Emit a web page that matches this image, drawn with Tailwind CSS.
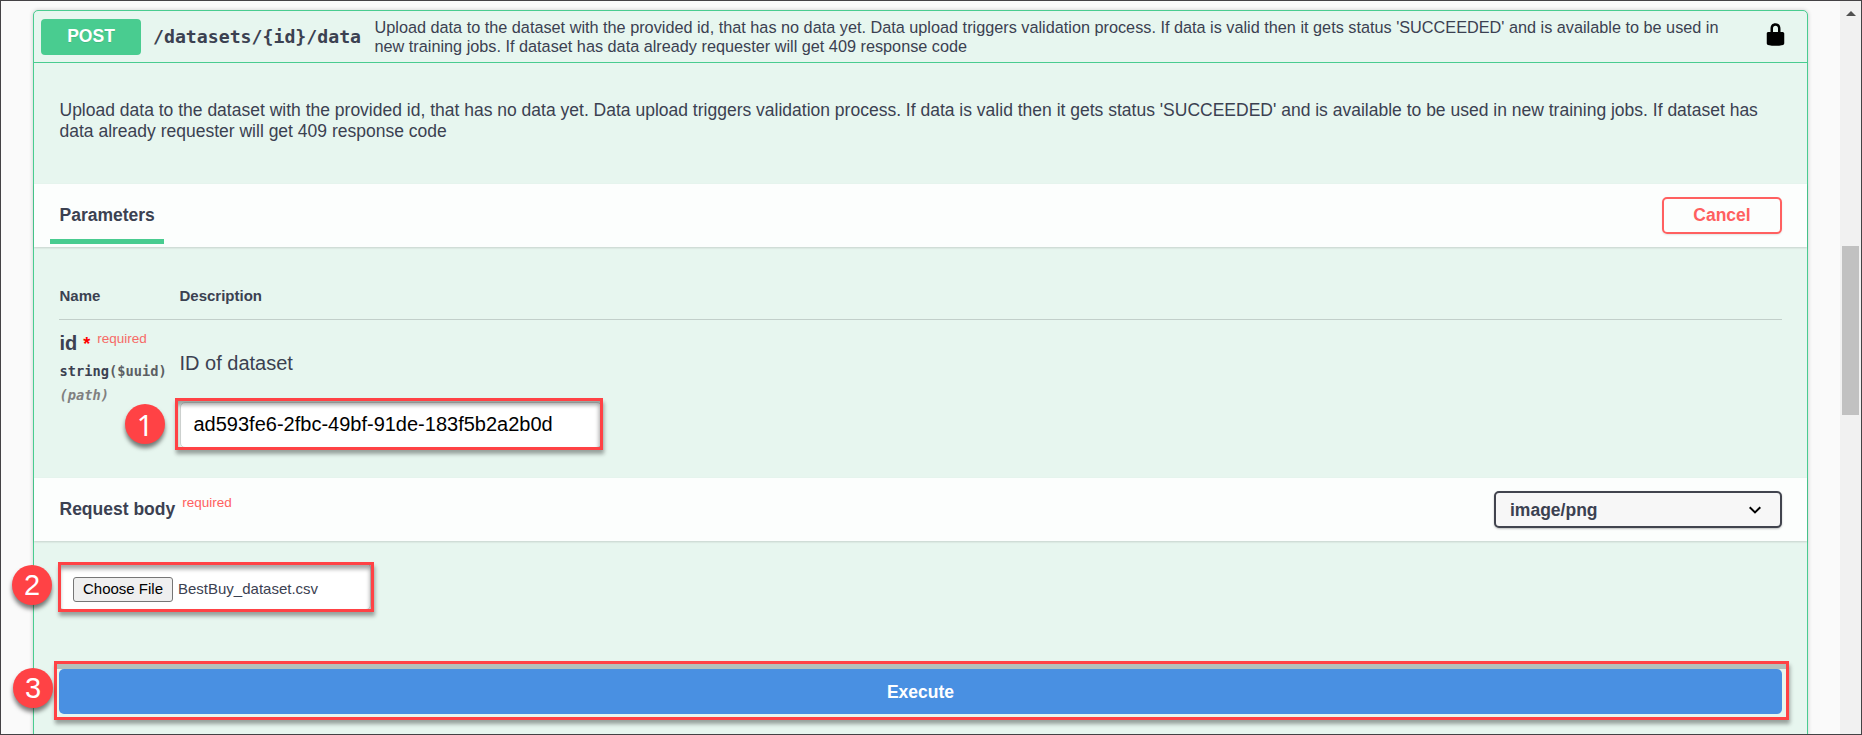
<!DOCTYPE html>
<html lang="en">
<head>
<meta charset="utf-8">
<title>API documentation</title>
<script src="https://cdn.jsdelivr.net/npm/@tailwindcss/browser@4"></script>
</head>
<body class="relative h-[735px] w-[1862px] overflow-hidden bg-[#fafafa] font-['Liberation_Sans',Arial,sans-serif] text-[#3b4151]">
<div class="flex h-full border border-[#444245]">
  <main class="h-full flex-1 overflow-hidden pt-[9px] pl-8">
    <section class="h-[760px] w-[1775px] rounded-[5px] border border-[#49cc90] bg-[#e7f6ef] shadow-[0_0_4px_rgba(0,0,0,0.19)]">
      <div class="flex h-[52px] items-center border-b border-[#49cc90] pl-[7px] pr-[19px]">
        <div class="flex h-9 w-[100px] shrink-0 items-center justify-center rounded-[4px] bg-[#49cc90] pb-px text-[17.5px] font-bold text-white [text-shadow:0_1px_0_rgba(0,0,0,0.1)]">POST</div>
        <div class="w-[233.5px] shrink-0 pt-px pl-3 font-['DejaVu_Sans_Mono',monospace] text-[18.2px] font-bold whitespace-nowrap">/datasets/{id}/data</div>
        <p class="w-[1360px] pt-px text-[16.25px] leading-[19px]">Upload data to the dataset with the provided id, that has no data yet. Data upload triggers validation process. If data is valid then it gets status 'SUCCEEDED' and is available to be used in<br>new training jobs. If dataset has data already requester will get 409 response code</p>
        <svg class="mb-[5px] ml-auto h-[25px] w-[25px]" viewBox="0 0 20 20" fill="#000"><path d="M15.8 8H14V5.6C14 2.703 12.665 1 10 1 7.334 1 6 2.703 6 5.6V8H4c-.553 0-1 .646-1 1.199V17c0 .549.428 1.139.951 1.307l1.197.387C5.672 18.861 6.55 19 7.1 19h5.8c.549 0 1.428-.139 1.951-.307l1.196-.387c.524-.167.953-.757.953-1.306V9.199C17 8.646 16.352 8 15.8 8zM12 8H8V5.199C8 3.754 8.797 3 10 3c1.203 0 2 .754 2 2.199V8z"/></svg>
      </div>
      <div class="h-[121px] pt-[37px] pl-[25.5px]">
        <p class="text-[17.5px] leading-[21px] whitespace-nowrap">Upload data to the dataset with the provided id, that has no data yet. Data upload triggers validation process. If data is valid then it gets status 'SUCCEEDED' and is available to be used in new training jobs. If dataset has<br>data already requester will get 409 response code</p>
      </div>
      <div class="flex h-[63px] items-center justify-between bg-[#fcfefd] pr-[25px] pl-4 shadow-[0_1px_2px_rgba(0,0,0,0.15)]">
        <div class="flex h-full w-[114px] flex-col pt-[21px] pb-[3px]">
          <h4 class="pl-[9.5px] text-[17.5px] leading-5 font-bold">Parameters</h4>
          <div class="mt-auto h-[5px] bg-[#49cc90]"></div>
        </div>
        <button class="h-[37px] w-[120px] rounded-[5px] border-2 border-[#ff6060] pb-px text-[17.5px] font-bold text-[#ff6060] shadow-[0_1px_2px_rgba(0,0,0,0.1)]">Cancel</button>
      </div>
      <div class="h-[231px] px-[25px] pt-10">
        <div class="flex h-[33px] border-b border-[#c2cfca] pl-[0.5px] text-[15px] leading-[18px] font-bold">
          <span class="w-[120px]">Name</span><span>Description</span>
        </div>
        <div class="flex pl-[0.5px]">
          <div class="w-[120px] shrink-0 whitespace-nowrap">
            <div class="mt-[11px] flex h-6 items-start">
              <b class="text-[20px] leading-6">id</b>
              <b class="ml-1.5 text-[18px] leading-[26px] text-[#f00]">*</b>
              <span class="ml-[7px] text-[13.5px] leading-4 text-[#f66a66]">required</span>
            </div>
            <div class="mt-[7px] font-['DejaVu_Sans_Mono',monospace] text-[13.7px] leading-[18px] font-bold">string<span class="text-[#5c5f63]">($uuid)</span></div>
            <div class="mt-1.5 font-['DejaVu_Sans_Mono',monospace] text-[13.7px] leading-[18px] font-bold text-[#808080] italic">(path)</div>
          </div>
          <div>
            <p class="mt-[31px] text-[20px] leading-6">ID of dataset</p>
            <div class="mt-[27px] flex h-[46px] w-[422px] items-center rounded-[5px] border border-[#d0d4d2] bg-white pb-0.5 pl-[13px] text-[20px] text-black">ad593fe6-2fbc-49bf-91de-183f5b2a2b0d</div>
          </div>
        </div>
      </div>
      <div class="flex h-[63px] items-center justify-between bg-[#fcfefd] pr-[25px] pl-[25.5px] shadow-[0_1px_2px_rgba(0,0,0,0.15)]">
        <div class="flex items-start pb-0.5">
          <h4 class="text-[17.5px] leading-5 font-bold">Request body</h4>
          <span class="-mt-1 ml-[7px] text-[13.5px] leading-4 text-[#ff6060]">required</span>
        </div>
        <div class="flex h-[37px] w-72 items-center justify-between rounded-[5px] border-2 border-[#41444e] bg-[#f7f7f7] pr-[19px] pl-[14px] text-[17.5px] font-bold shadow-[0_1px_2px_rgba(0,0,0,0.25)]">
          <span class="pt-px">image/png</span>
          <svg class="h-2 w-3" viewBox="0 0 12 8" fill="none" stroke="#000" stroke-width="2"><path d="M.7 1.2 6 6.4l5.3-5.2"/></svg>
        </div>
      </div>
      <div class="pt-[22px] pl-[25px]">
        <div class="flex h-[47px] w-[312px] items-center rounded-[5px] border border-[#d9d9d9] bg-white pt-1.5 pl-[13px] text-[15px]">
          <button class="h-[25px] w-[100px] rounded-[3px] border border-[#767676] bg-[#efefef] text-black">Choose File</button>
          <span class="ml-[5px]">BestBuy_dataset.csv</span>
        </div>
        <button class="mt-[59px] block h-[45px] w-[1723px] rounded-[5px] bg-[#4990e2] pt-px text-[17.5px] font-bold text-white">Execute</button>
      </div>
    </section>
  </main>
  <aside class="flex w-[21px] flex-col items-center bg-[#f1f1f1] pt-[10px]">
    <svg class="h-[5px] w-[10px]" viewBox="0 0 10 5" fill="#505050"><path d="M0 5 5 0l5 5z"/></svg>
    <div class="mt-[230px] h-[169px] w-[17px] bg-[#c1c1c1]"></div>
  </aside>
</div>

<!-- Step callouts over the form -->
<div class="absolute top-[398px] left-[175px] h-[52px] w-[428px] border-3 border-[#ff4245] shadow-[1px_4px_4px_rgba(0,0,0,0.35),inset_-1px_4px_4px_rgba(0,0,0,0.35)]"></div>
<div class="absolute top-[562px] left-[58px] h-[50px] w-[316px] border-3 border-[#ff4245] shadow-[1px_4px_4px_rgba(0,0,0,0.35),inset_-1px_4px_4px_rgba(0,0,0,0.35)]"></div>
<div class="absolute top-[661px] left-[54px] h-[59px] w-[1735px] border-3 border-[#ff4245] shadow-[1px_4px_4px_rgba(0,0,0,0.35)]"></div>
<div class="absolute top-[664px] left-[57px] h-[5px] w-[1729px] bg-[#b4c1bb]"></div>
<div class="absolute top-[404px] left-[125px] flex h-10 w-10 items-center justify-center rounded-full bg-[#ff4245] font-['Noto_Sans',sans-serif] text-[29px] leading-none text-white shadow-[0_4px_4px_rgba(0,0,0,0.5)]">1</div>
<div class="absolute top-[565px] left-[12px] flex h-10 w-10 items-center justify-center rounded-full bg-[#ff4245] text-[29px] leading-none text-white shadow-[0_4px_4px_rgba(0,0,0,0.5)]">2</div>
<div class="absolute top-[668px] left-[13px] flex h-10 w-10 items-center justify-center rounded-full bg-[#ff4245] text-[29px] leading-none text-white shadow-[0_4px_4px_rgba(0,0,0,0.5)]">3</div>
</body>
</html>
